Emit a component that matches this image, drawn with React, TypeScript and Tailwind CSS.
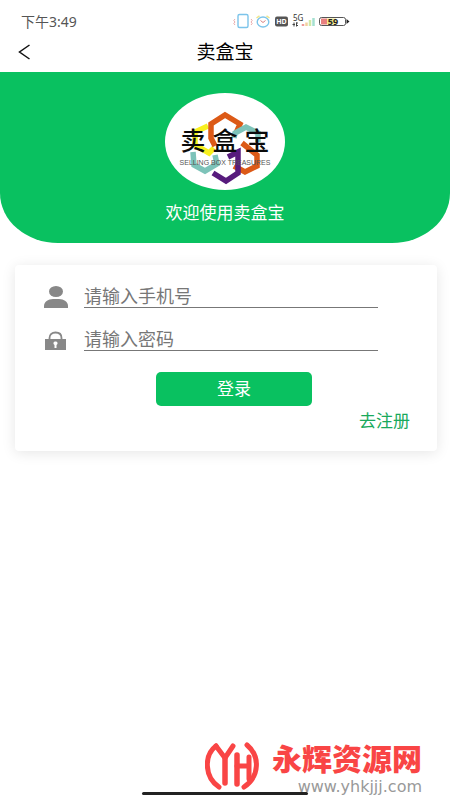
import { useState } from "react"

const StatusIcons = () => (
  <svg width="120" height="20" viewBox="0 0 120 20" fill="none" aria-hidden="true">
    {/* vibrate */}
    <rect x="6" y="2.5" width="10" height="13" rx="1.5" stroke="#7cc4ea" strokeWidth="1.4" />
    <path d="M3 7L1.800 8.500 3 10l-1.200 1.500L3 13M19 7l1.200 1.500L19 10l1.200 1.500L19 13" stroke="#e9a3a3" strokeWidth="0.9" />
    {/* alarm */}
    <ellipse cx="31" cy="10" rx="5.8" ry="5" stroke="#7cc4ea" strokeWidth="1.4" />
    <path d="M24.500 6l3-2.200M37.500 6l-3-2.200" stroke="#efe58a" strokeWidth="1.5" />
    <path d="M28.500 8.500l2.500 2 2.500-2" stroke="#d98080" strokeWidth="1" />
    {/* HD */}
    <rect x="43" y="4.500" width="13" height="10" rx="2" fill="#555" />
    <text x="49.500" y="12.200" fontSize="7" fontWeight="700" textAnchor="middle" fill="#fff">HD</text>
    {/* signal */}
    <text x="61" y="9" fontSize="8" fill="#333">5G</text>
    <path d="M60.500 12.500h2.500M62 10.500v4M64.500 10.500v4M64 11h2M64 13.500h2" stroke="#444" strokeWidth="1" />
    <path d="M71 14v-2" stroke="#ef9a9a" strokeWidth="2.500" />
    <path d="M74.500 14v-3.500" stroke="#f3d09e" strokeWidth="2.500" />
    <path d="M78 14V8" stroke="#cfe9a8" strokeWidth="2.500" />
    <path d="M81.500 14V6" stroke="#a5e0d0" strokeWidth="2.500" />
    {/* battery */}
    <rect x="87.500" y="5.500" width="26" height="8" rx="2" stroke="#555" />
    <rect x="89" y="6.500" width="6" height="6" fill="#e88080" />
    <rect x="95" y="6.500" width="9" height="6" fill="#f5ec8c" />
    <path d="M114.500 7l3 2.500-3 2.500z" fill="#222" />
    <text x="101" y="12.700" fontSize="9" fontWeight="700" textAnchor="middle" fill="#222">59</text>
  </svg>
)

const BrandLogo = () => (
  <svg viewBox="0 0 120 97" className="h-[97px] w-[120px]" role="img" aria-label="卖盒宝">
    <ellipse cx="60" cy="48.500" rx="60" ry="48.500" fill="#fff" />
    <g fill="none" strokeWidth="5.500">
      <path d="M43 33l-13 6v13l14 8 5-5" stroke="#f8ef1f" />
      <path d="M50 53l-4-8V31l14-9 15 9-4 9" stroke="#dc5a17" />
      <path d="M69 45l1-5 11-6 12 6v9" stroke="#7dc3b9" />
      <path d="M77 50l15 12v11l-12 6-11-6" stroke="#dc5a17" />
      <path d="M28 59l1 13 11 6 12-7-2-9" stroke="#7dc3b9" />
      <path d="M48 80l13 8 12-8V59l-10 5" stroke="#571b7d" />
    </g>
    <g fontSize="25" fontWeight="500" fill="#0b0b0b" textAnchor="middle" fontFamily="'Noto Sans CJK SC', sans-serif">
      <text x="28" y="57">卖</text>
      <text x="60" y="57">盒</text>
      <text x="92" y="57">宝</text>
    </g>
    <text x="60" y="72" fontSize="7" textAnchor="middle" fill="#555" fontFamily="'Liberation Sans', sans-serif">
      SELLING BOX TREASURES
    </text>
  </svg>
)

const UserIcon = () => (
  <svg width="24" height="22" viewBox="0 0 24 22" fill="#888" aria-hidden="true">
    <ellipse cx="12" cy="5.500" rx="7" ry="5.500" />
    <path d="M0 22v-2c0-4 4-7 9-7h6c5 0 9 3 9 7v2z" />
  </svg>
)

const LockIcon = () => (
  <svg width="24" height="20" viewBox="0 0 24 20" aria-hidden="true">
    <path d="M5.500 9V7c0-3.500 2.500-5.500 6-5.500s6 2 6 5.500v2" fill="none" stroke="#888" strokeWidth="1.800" />
    <rect x="1" y="8" width="21" height="11" fill="#888" />
    <path d="M11.500 10.500a2 1.800 0 0 1 1 3.400V17h-2v-3.100a2 1.800 0 0 1 1-3.400z" fill="#fff" />
  </svg>
)

const Watermark = () => (
  <div className="absolute right-7 bottom-[5px] flex items-start gap-3">
    <svg width="55" height="50" viewBox="0 0 55 50" fill="none" stroke="#f94545" strokeWidth="5" strokeLinecap="round" aria-hidden="true">
      <path d="M11 5C-1 14-1 36 14 46" />
      <path d="M11 5l9 12 8-12" />
      <path d="M20 17v25M32 14v29" strokeWidth="5.500" />
      <path d="M32 25h12M44 16v22" />
      <path d="M42 4c13 11 13 31-3 42" />
    </svg>
    <div className="flex flex-col items-end gap-[2px]">
      <span className="text-[30px] leading-9 font-black text-[#f94545]">永辉资源网</span>
      <span className="font-['DejaVu_Sans',sans-serif] text-[16px] leading-4 text-[#999]">www.yhkjjj.com</span>
    </div>
  </div>
)

const App = () => {
  const [phone, setPhone] = useState("")
  const [password, setPassword] = useState("")

  return (
    <div className="relative flex min-h-screen flex-col bg-white font-['Noto_Sans','Noto_Sans_CJK_SC',sans-serif]">
      <div className="flex h-8 items-end justify-between pr-[98px] pl-[21px]">
        <span className="text-[14px] leading-5 text-[#555]">下午3:49</span>
        <StatusIcons />
      </div>

      <header className="grid h-10 grid-cols-[48px_1fr_48px] items-center">
        <button type="button" aria-label="返回" className="flex h-10 items-center pl-[18px]">
          <svg width="13" height="16" viewBox="0 0 13 16" fill="none" stroke="#111" strokeWidth="1.500">
            <path d="M11.500 1L1.500 8l10 7" />
          </svg>
        </button>
        <h1 className="text-center text-[19px] leading-6 text-black">卖盒宝</h1>
      </header>

      <section className="flex flex-col items-center rounded-b-[58px_50px] bg-[#09c160] pt-[21px] pb-[18px]">
        <BrandLogo />
        <p className="mt-[11px] text-[17px] leading-6 text-white">欢迎使用卖盒宝</p>
      </section>

      <form
        className="mt-[22px] mr-[13px] ml-[15px] flex flex-col rounded bg-white pt-[19px] pb-[18px] shadow-[0_2px_14px_rgba(0,0,0,0.1)]"
        onSubmit={(e) => e.preventDefault()}
      >
        <div className="mr-[59px] ml-[29px] flex flex-col gap-[19px]">
          <label className="flex items-end gap-4">
            <UserIcon />
            <input
              type="tel"
              aria-label="手机号"
              placeholder="请输入手机号"
              value={phone}
              onChange={(e) => setPhone(e.target.value)}
              className="h-6 min-w-0 flex-1 border-b border-[#777] text-[18px] leading-6 outline-none placeholder:text-[#777]"
            />
          </label>
          <label className="flex items-end gap-4">
            <LockIcon />
            <input
              type="password"
              aria-label="密码"
              placeholder="请输入密码"
              value={password}
              onChange={(e) => setPassword(e.target.value)}
              className="h-6 min-w-0 flex-1 border-b border-[#777] text-[18px] leading-6 outline-none placeholder:text-[#777]"
            />
          </label>
        </div>
        <button
          type="submit"
          className="mt-[21px] ml-[141px] h-[34px] w-[156px] rounded-[5px] bg-[#09c160] text-[17px] leading-6 text-white"
        >
          登录
        </button>
        <a href="#register" className="mt-[3px] mr-[27px] self-end text-[17px] leading-6 text-[#18a95c]">
          去注册
        </a>
      </form>

      <div className="mx-auto mt-auto mb-[5px] h-[3px] w-[166px] rounded-full bg-[#222]" />
      <Watermark />
    </div>
  )
}

export default App
